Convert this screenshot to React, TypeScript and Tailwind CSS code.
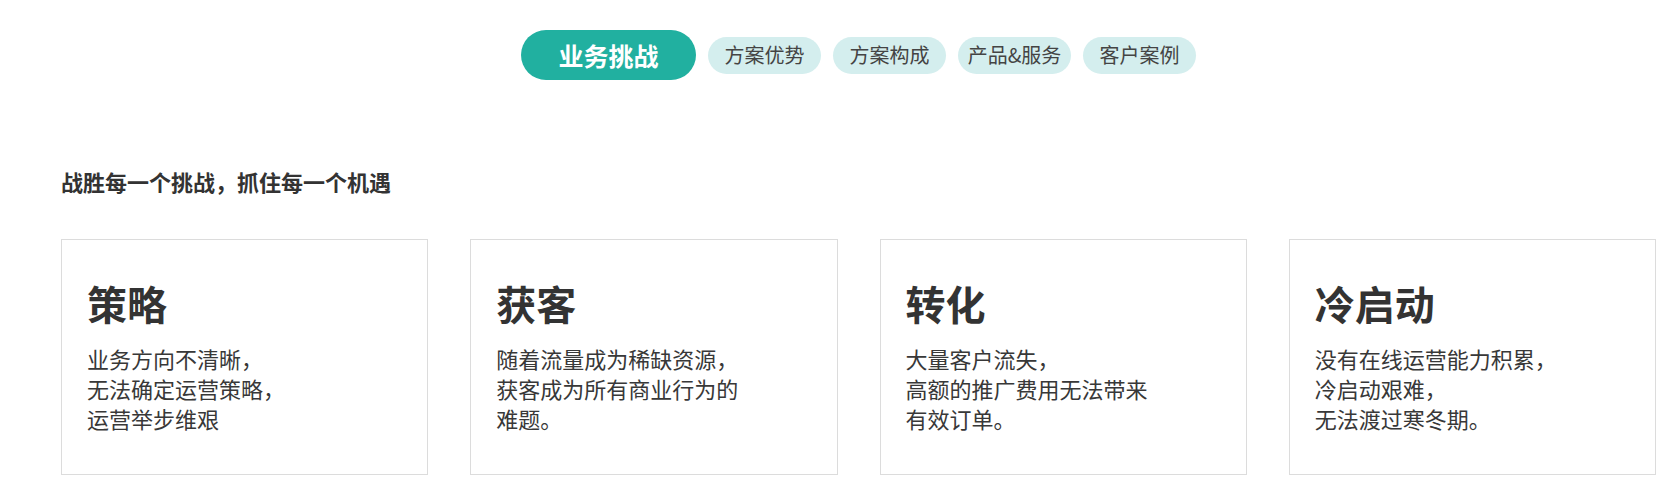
const tabs = ['方案优势', '方案构成', '产品&服务', '客户案例'];

const cards = [
  { title: '策略', lines: ['业务方向不清晰，', '无法确定运营策略，', '运营举步维艰'] },
  { title: '获客', lines: ['随着流量成为稀缺资源，', '获客成为所有商业行为的', '难题。'] },
  { title: '转化', lines: ['大量客户流失，', '高额的推广费用无法带来', '有效订单。'] },
  { title: '冷启动', lines: ['没有在线运营能力积累，', '冷启动艰难，', '无法渡过寒冬期。'] },
];

export default function App() {
  return (
    <main
      className="w-[1679px] h-[486px] bg-white text-[#333] overflow-hidden"
      style={{ fontFamily: '"Microsoft YaHei", "Noto Sans CJK SC", "Noto Sans", sans-serif' }}
    >
      <div className="ml-[61px] w-[1595px] pt-[30px]">
        <nav className="flex items-center justify-center gap-[12px]">
          <button className="w-[175px] h-[50px] rounded-full bg-[#21b0a0] text-white text-[25px] font-bold leading-none">
            业务挑战
          </button>
          {tabs.map((t) => (
            <button
              key={t}
              className="w-[113px] h-[37px] rounded-full bg-[#d4eeee] text-[#444] text-[20px] leading-none"
            >
              {t}
            </button>
          ))}
        </nav>

        <h2 className="mt-[86px] text-[22px] leading-[30px] font-bold text-[#333]">
          战胜每一个挑战，抓住每一个机遇
        </h2>

        <section className="mt-[43px] grid grid-cols-4 gap-[42px]">
          {cards.map((c) => (
            <div key={c.title} className="h-[236px] border border-[#dcdcdc] pl-[25px] pt-[39px]">
              <h3 className="text-[40px] leading-[48px] font-bold text-[#333]">{c.title}</h3>
              <div className="mt-[16px] text-[22px] leading-[30px] text-[#383838]">
                {c.lines.map((l) => (
                  <p key={l}>{l}</p>
                ))}
              </div>
            </div>
          ))}
        </section>
      </div>
    </main>
  );
}
